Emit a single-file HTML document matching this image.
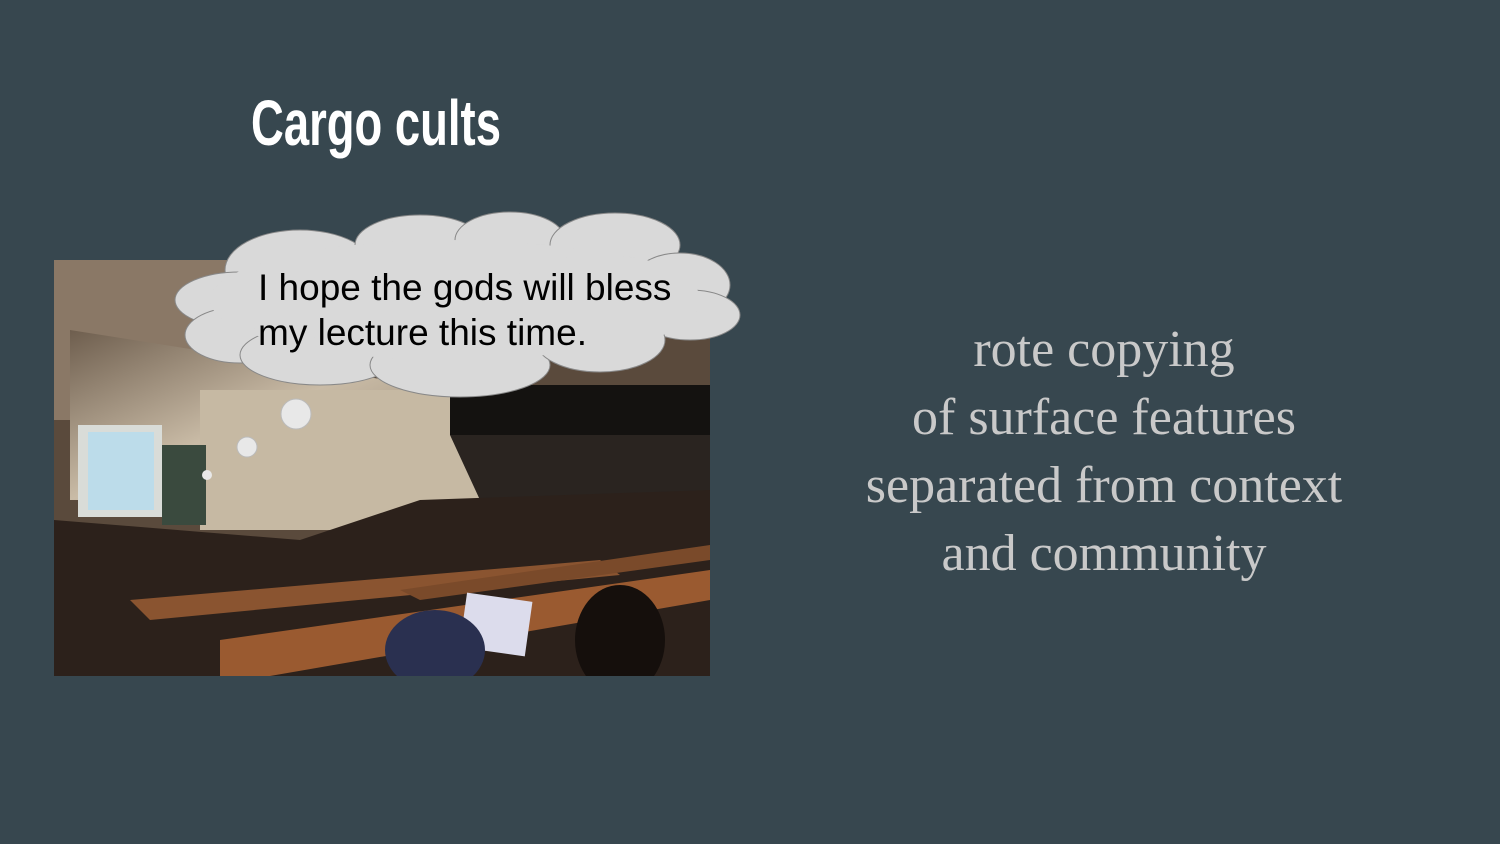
<!DOCTYPE html>
<html><head><meta charset="utf-8"><style>
html,body{margin:0;padding:0}
body{width:1500px;height:844px;background:#37474f;position:relative;overflow:hidden}
.title{position:absolute;left:251px;top:86px;font-family:"Liberation Sans",sans-serif;font-weight:bold;font-size:64px;color:#fff;transform:scaleX(0.71);transform-origin:left top;white-space:nowrap}
.right{position:absolute;left:754px;width:700px;top:316px;text-align:center;font-family:"Liberation Serif",serif;font-size:52px;line-height:68px;color:#c9c9c9}
svg{position:absolute;left:0;top:0}
.bub{position:absolute;left:258px;top:265px;font-family:"Liberation Sans",sans-serif;font-size:37px;line-height:45px;color:#000;white-space:nowrap}
</style></head><body>
<div class="title">Cargo cults</div>
<svg width="1500" height="844">
<defs>
<linearGradient id="wall" x1="0" y1="0" x2="1" y2="1"><stop offset="0" stop-color="#6e5e4e"/><stop offset="0.5" stop-color="#c9bba6"/><stop offset="1" stop-color="#8f806c"/></linearGradient>
<clipPath id="cp"><rect x="54" y="260" width="656" height="416"/></clipPath>
</defs>
<g clip-path="url(#cp)">
<rect x="54" y="260" width="656" height="416" fill="#5a4a3c"/>
<polygon points="54,260 240,260 230,420 54,420" fill="#8a7866"/>
<polygon points="70,330 450,390 450,500 70,500" fill="url(#wall)"/>
<rect x="200" y="390" width="370" height="140" fill="#c6b9a3"/>
<rect x="450" y="385" width="260" height="50" fill="#141210"/>
<polygon points="450,435 710,435 710,560 480,500" fill="#2a2420"/>
<rect x="78" y="425" width="84" height="92" fill="#d9dcd8"/>
<rect x="88" y="432" width="66" height="78" fill="#bcdcea"/>
<rect x="162" y="445" width="44" height="80" fill="#3a4a3e"/>
<polygon points="54,520 300,540 420,500 710,490 710,676 54,676" fill="#2c211b"/>
<polygon points="220,640 710,570 710,600 270,676 220,676" fill="#9a5a30"/>
<polygon points="130,600 600,560 620,575 150,620" fill="#8a5430"/>
<polygon points="400,590 710,545 710,560 420,600" fill="#7a4a2a"/>
<rect x="463" y="597" width="66" height="55" fill="#dcdcec" transform="rotate(8 496 624)"/>
<ellipse cx="620" cy="640" rx="45" ry="55" fill="#150f0c"/>
<ellipse cx="435" cy="650" rx="50" ry="40" fill="#2a3050"/>
</g>
<circle cx="296" cy="414" r="15" fill="#e8e8e8" stroke="#bbb"/>
<circle cx="247" cy="447" r="10" fill="#e8e8e8" stroke="#bbb"/>
<circle cx="207" cy="475" r="5" fill="#e8e8e8"/>
<g fill="#d9d9d9" stroke="#888" stroke-width="1">
<ellipse cx="300" cy="270" rx="75" ry="40"/>
<ellipse cx="420" cy="245" rx="65" ry="30"/>
<ellipse cx="510" cy="240" rx="55" ry="28"/>
<ellipse cx="615" cy="245" rx="65" ry="32"/>
<ellipse cx="680" cy="285" rx="50" ry="32"/>
<ellipse cx="690" cy="315" rx="50" ry="25"/>
<ellipse cx="240" cy="300" rx="65" ry="28"/>
<ellipse cx="240" cy="335" rx="55" ry="28"/>
<ellipse cx="320" cy="355" rx="80" ry="30"/>
<ellipse cx="460" cy="365" rx="90" ry="32"/>
<ellipse cx="600" cy="340" rx="65" ry="32"/>
</g>
<g fill="#d9d9d9">
<ellipse cx="450" cy="300" rx="240" ry="60"/>
<ellipse cx="300" cy="300" rx="70" ry="38"/>
<ellipse cx="600" cy="300" rx="100" ry="45"/>
</g>
</svg>
<div class="bub">I hope the gods will bless<br>my lecture this time.</div>
<div class="right">rote copying<br>of surface features<br>separated from context<br>and community</div>
</body></html>
